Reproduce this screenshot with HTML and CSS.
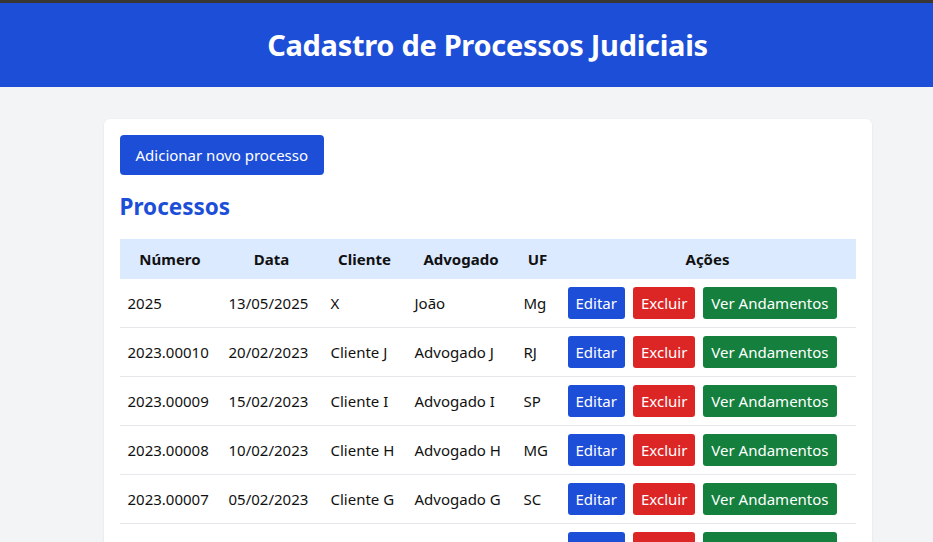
FILE: index.html
```html
<!DOCTYPE html>
<html lang="pt-BR">
<head>
<meta charset="utf-8">
<title>Cadastro de Processos Judiciais</title>
<link rel="stylesheet" href="styles.css">
</head>
<body>
<div class="page">
<header class="topbar">
  <h1 class="title">Cadastro de Processos Judiciais</h1>
</header>
<main class="card">
  <button class="btn btn-blue btn-add">Adicionar novo processo</button>
  <h2 class="section-title">Processos</h2>
  <table class="table">
    <colgroup>
      <col class="c-num"><col class="c-data"><col class="c-cli"><col class="c-adv"><col class="c-uf"><col class="c-act">
    </colgroup>
    <thead>
      <tr><th>Número</th><th>Data</th><th>Cliente</th><th>Advogado</th><th>UF</th><th>Ações</th></tr>
    </thead>
    <tbody>
      <tr><td>2025</td><td>13/05/2025</td><td>X</td><td>João</td><td>Mg</td><td><div class="actions"><button class="btn btn-blue">Editar</button><button class="btn btn-red">Excluir</button><button class="btn btn-green">Ver Andamentos</button></div></td></tr>
      <tr><td>2023.00010</td><td>20/02/2023</td><td>Cliente J</td><td>Advogado J</td><td>RJ</td><td><div class="actions"><button class="btn btn-blue">Editar</button><button class="btn btn-red">Excluir</button><button class="btn btn-green">Ver Andamentos</button></div></td></tr>
      <tr><td>2023.00009</td><td>15/02/2023</td><td>Cliente I</td><td>Advogado I</td><td>SP</td><td><div class="actions"><button class="btn btn-blue">Editar</button><button class="btn btn-red">Excluir</button><button class="btn btn-green">Ver Andamentos</button></div></td></tr>
      <tr><td>2023.00008</td><td>10/02/2023</td><td>Cliente H</td><td>Advogado H</td><td>MG</td><td><div class="actions"><button class="btn btn-blue">Editar</button><button class="btn btn-red">Excluir</button><button class="btn btn-green">Ver Andamentos</button></div></td></tr>
      <tr><td>2023.00007</td><td>05/02/2023</td><td>Cliente G</td><td>Advogado G</td><td>SC</td><td><div class="actions"><button class="btn btn-blue">Editar</button><button class="btn btn-red">Excluir</button><button class="btn btn-green">Ver Andamentos</button></div></td></tr>
      <tr class="last"><td></td><td></td><td></td><td></td><td></td><td><div class="actions"><button class="btn btn-blue">Editar</button><button class="btn btn-red">Excluir</button><button class="btn btn-green">Ver Andamentos</button></div></td></tr>
    </tbody>
  </table>
</main>
</div>
</body>
</html>
```
FILE: styles.css
```css
* { box-sizing: border-box; }
html, body { margin: 0; padding: 0; }
body {
  background: #f3f4f6;
  font-family: "Noto Sans", "Open Sans", sans-serif;
  color: #111;
  overflow: hidden;
  height: 542px;
}
.page {
  width: 975px;
  border-top: 3px solid #3a3633;
}
.topbar {
  background: #1d4ed8;
  padding: 24px 0;
  text-align: center;
}
.title {
  margin: 0;
  color: #fff;
  font-size: 29px;
  line-height: 36px;
  font-weight: 700;
  letter-spacing: -0.3px;
}
.card {
  width: 768px;
  margin: 32px auto 0;
  background: #fff;
  border-radius: 6px;
  padding: 16px;
  box-shadow: 0 1px 3px rgba(0,0,0,0.08);
}
.btn {
  font-family: inherit;
  border: 0;
  color: #fff;
  font-size: 15px;
  line-height: 24px;
  padding: 4px 8px;
  border-radius: 3px;
  cursor: pointer;
}
.btn-add {
  padding: 8px 16px;
  border-radius: 4px;
  display: block;
}
.btn-blue { background: #1d4ed8; }
.btn-red { background: #dc2626; }
.btn-green { background: #15803d; }
.section-title {
  margin: 16px 0 16px;
  color: #1d4ed8;
  font-size: 22.5px;
  line-height: 32px;
  font-weight: 700;
}
.table {
  width: 100%;
  border-collapse: collapse;
  table-layout: fixed;
  font-size: 15px;
}
.c-num { width: 101px; }
.c-data { width: 102px; }
.c-cli { width: 84px; }
.c-adv { width: 109px; }
.c-uf { width: 44px; }
.c-act { width: 296px; }
.table th {
  background: #dbeafe;
  padding: 8px;
  line-height: 24px;
  font-weight: 700;
  text-align: center;
}
.table td {
  padding: 8px;
  line-height: 24px;
  border-bottom: 1px solid #e5e7eb;
  white-space: nowrap;
}
.actions {
  display: flex;
  gap: 8px;
}
```
